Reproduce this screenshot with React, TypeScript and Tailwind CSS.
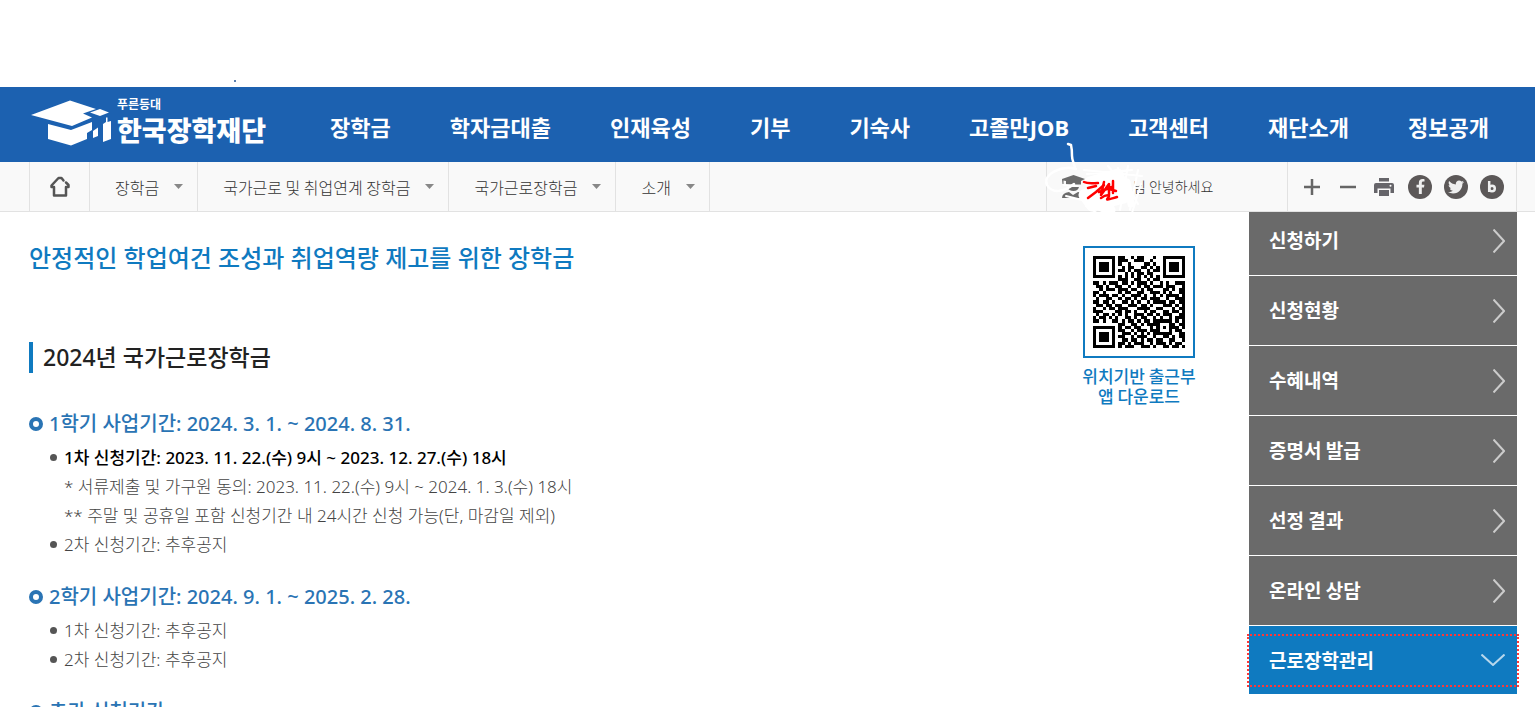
import { FaFacebookF, FaTwitter } from "react-icons/fa";

const NAV = [
  "장학금",
  "학자금대출",
  "인재육성",
  "기부",
  "기숙사",
  "고졸만JOB",
  "고객센터",
  "재단소개",
  "정보공개",
];

const CRUMBS = ["장학금", "국가근로 및 취업연계 장학금", "국가근로장학금", "소개"];

const SIDE_MENU = [
  "신청하기",
  "신청현황",
  "수혜내역",
  "증명서 발급",
  "선정 결과",
  "온라인 상담",
];

type Row = { text: string; bullet?: boolean; strong?: boolean };

const TERMS: { title: string; rows: Row[] }[] = [
  {
    title: "1학기 사업기간: 2024. 3. 1. ~ 2024. 8. 31.",
    rows: [
      {
        text: "1차 신청기간: 2023. 11. 22.(수) 9시 ~ 2023. 12. 27.(수) 18시",
        bullet: true,
        strong: true,
      },
      { text: "* 서류제출 및 가구원 동의: 2023. 11. 22.(수) 9시 ~ 2024. 1. 3.(수) 18시" },
      { text: "** 주말 및 공휴일 포함 신청기간 내 24시간 신청 가능(단, 마감일 제외)" },
      { text: "2차 신청기간: 추후공지", bullet: true },
    ],
  },
  {
    title: "2학기 사업기간: 2024. 9. 1. ~ 2025. 2. 28.",
    rows: [
      { text: "1차 신청기간: 추후공지", bullet: true },
      { text: "2차 신청기간: 추후공지", bullet: true },
    ],
  },
  { title: "추가 신청기간", rows: [] },
];

const QR = [
  "11111110110010110001001111111",
  "10000010111001110010001000001",
  "10111010100100001101001011101",
  "10111010010110011010101011101",
  "10111010110101100101101011101",
  "10000010001010110110001000001",
  "11111110101010101010101111111",
  "00000000111001100101100000000",
  "11010111011010111010010100111",
  "01101001100100101101110111001",
  "00101110111011010110001101011",
  "11010000101100110011101010011",
  "10111011010011101001010111101",
  "01001100101101011011100100111",
  "11011010011010100101111011011",
  "01101101100111011010001110101",
  "10010110111000111100110001011",
  "11100001101101001011001101101",
  "01011010101001110110101110011",
  "10110101001101011001010010111",
  "11010011010110101101111110101",
  "00000000110011010111100011011",
  "11111110101101100010101011101",
  "10000010110010111011100010110",
  "10111010011101010101111110011",
  "10111010110010111001001101011",
  "10111010011011010110110011001",
  "10000010110101110010111010110",
  "11111110101110011101001101101",
];

function QrCode() {
  return (
    <svg viewBox="0 0 29 29" className="h-[92px] w-[92px]" shapeRendering="crispEdges" role="img" aria-label="QR">
      {QR.map((line, y) =>
        line.split("").map((cell, x) =>
          cell === "1" ? <rect key={`${x}-${y}`} x={x} y={y} width="1" height="1" /> : null
        )
      )}
    </svg>
  );
}

function Logo() {
  return (
    <a href="#" className="flex shrink-0 items-start gap-1.5 text-white">
      <svg width="80" height="46" viewBox="0 0 80 46" fill="currentColor" className="mt-[13px]">
        <path d="M0 15 39 .5 65 9 52 13.500 61 17.500 41 26Z" />
        <path d="M59 12.500 69 9 78 12.500 69 16Z" />
        <path d="M17 24 40 30 61 22V30L56 33V39L40 45.500 17 39Z" />
        <path d="M62 31 67 27.500V36L62 38Z" />
        <path d="M75 17.500H76.500V22L80 21V39L72 42V24L75 22Z" />
      </svg>
      <span className="flex flex-col pt-[9px]">
        <span className="text-[12px] leading-[16px] font-bold">푸른등대</span>
        <span className="text-[27px] leading-[36px] font-black">한국장학재단</span>
      </span>
    </a>
  );
}

function HomeIcon() {
  return (
    <svg width="20" height="22" viewBox="0 0 20 22" fill="none" stroke="#555" strokeWidth="2.500" strokeLinejoin="round" strokeLinecap="round">
      <path d="M13.500 4.500 11.500 2H8.500L1.500 9.500V11H4V19.500H16V11H18.500V9L16 6.500" />
    </svg>
  );
}

function PrinterIcon() {
  return (
    <svg width="20" height="20" viewBox="0 0 20 20" fill="#66656a">
      <path d="M5 1H15V4.500H5Z" />
      <path d="M2 6H18Q20 6 20 8V16H16.500V11.500H3.500V16H0V8Q0 6 2 6Z" />
      <path d="M5 13H15V19H5Z" />
      <circle cx="16.500" cy="8.700" r="1" fill="#fff" />
    </svg>
  );
}

function UserIcon() {
  return (
    <svg width="23" height="23" viewBox="0 0 23 23" fill="#6b6b6b">
      <path d="M0 4 11.500 0 23 4 19 6V9.500H4V6L1.500 5.500V9H.5Z" />
      <path d="M5 12H17Q16 16 11.500 16T5 12Z" />
      <path d="M0 23Q0 18 7 17L11 20 16 17Q23 18 23 23Z" />
    </svg>
  );
}

// hand-drawn marks over the user name
function Scribble() {
  return (
    <svg
      width="112"
      height="76"
      viewBox="0 0 112 76"
      fill="none"
      strokeLinecap="round"
      strokeLinejoin="round"
      className="pointer-events-none absolute -top-[22px] -left-[7px]"
    >
      <g stroke="#fff">
        <path d="M28 4 31 5M31 5C32 9 32 12 32 16C32 20 34 23 35 28" strokeWidth="2.500" />
        <path d="M50 42 78 34 84 58 52 66 44 55 62 48 83 42 50 60 70 70" strokeWidth="11" />
        <path d="M36 29C22 25 2 34 7 45C12 54 24 52 34 44" strokeWidth="2.500" />
        <path d="M24 45 37 46M26 56 42 60" strokeWidth="2" />
        <path d="M47 34 92 30M44 30 102 36M68 26 96 60M88 26 80 70M98 30 90 70M101 44 92 73M46 66 60 75M42 60 78 75M82 34 98 64M78 28 70 74M64 72 58 76" strokeWidth="2" />
        <path d="M87 42 91 64" strokeWidth="7" />
      </g>
      <g stroke="#f00" strokeWidth="2.500">
        <path d="M44 42C48 44 53 43 58 43M48 48 56 46M48 58 56 52 64 45" />
        <path d="M64 42 61 55 69 44 69 55M73 41 73 53M66 48 76 51M59 52 72 47" />
        <path d="M61 58C67 54 71 55 68 58C65 61 70 59 77 57" />
      </g>
    </svg>
  );
}

const iconButton = "flex h-6 w-6 items-center justify-center";
const roundButton = "flex h-6 w-6 items-center justify-center rounded-full bg-[#5c5858] text-[#eee]";

export default function App() {
  return (
    <div className="h-screen overflow-hidden bg-white font-['Noto_Sans_CJK_KR',sans-serif] text-[#333]">
      <div className="relative h-[87px]">
        <span className="absolute bottom-[5px] left-[234px] h-0.5 w-0.5 bg-[#5b7fae]" />
      </div>

      <header className="flex h-[75px] bg-[#1c61b0] pr-[46px] pl-[31px]">
        <Logo />
        <nav className="ml-16 flex flex-1 items-center justify-between pt-1.5 font-['Noto_Sans','Noto_Sans_CJK_KR',sans-serif] text-[22px] font-bold text-white">
          {NAV.map((item) => (
            <a key={item} href="#" className="whitespace-nowrap">
              {item}
            </a>
          ))}
        </nav>
      </header>

      <div className="relative z-10 flex h-[50px] border-b border-[#e2e2e2] bg-[#f9f9f9] pr-[18px] pl-[29px]">
        <a href="#" aria-label="홈" className="flex w-[61px] items-center justify-center border-x border-[#e2e2e2]">
          <HomeIcon />
        </a>
        {CRUMBS.map((crumb) => (
          <button
            key={crumb}
            type="button"
            className="flex items-center gap-[15px] border-r border-[#e2e2e2] pr-3.5 pl-[25px] text-[16px] font-light whitespace-nowrap"
          >
            {crumb}
            <svg width="9" height="5" viewBox="0 0 9 5" fill="#888">
              <path d="M0 0H9L4.500 5Z" />
            </svg>
          </button>
        ))}

        <div className="relative ml-auto flex w-[241px] items-center border-l border-[#e2e2e2] pl-[15px]">
          <UserIcon />
          <span className="ml-12 text-[14px] font-light">님 안녕하세요</span>
          <Scribble />
        </div>

        <div className="flex items-center gap-3 border-x border-[#e2e2e2] px-3">
          <button type="button" aria-label="확대" className={iconButton}>
            <svg width="16" height="16" viewBox="0 0 16 16" stroke="#666" strokeWidth="2.500">
              <path d="M8 0V16M0 8H16" />
            </svg>
          </button>
          <button type="button" aria-label="축소" className={iconButton}>
            <svg width="16" height="16" viewBox="0 0 16 16" stroke="#666" strokeWidth="2.500">
              <path d="M0 8H16" />
            </svg>
          </button>
          <button type="button" aria-label="인쇄" className={iconButton}>
            <PrinterIcon />
          </button>
          <a href="#" aria-label="페이스북" className={roundButton}>
            <FaFacebookF size={15} />
          </a>
          <a href="#" aria-label="트위터" className={roundButton}>
            <FaTwitter size={16} />
          </a>
          <a href="#" aria-label="블로그" className={roundButton}>
            <svg width="10" height="12" viewBox="0 0 10 12" fill="none" stroke="currentColor" strokeWidth="2.500">
              <path d="M2.200 0V11" />
              <circle cx="5" cy="7.500" r="2.800" />
            </svg>
          </a>
        </div>
      </div>

      <div className="flex pr-[18px] pl-[29px]">
        <main className="flex-1 pt-7 font-['Noto_Sans','Noto_Sans_CJK_KR',sans-serif]">
          <h1 className="text-[24px] leading-[36px] font-medium text-[#0f7ac0]">
            안정적인 학업여건 조성과 취업역량 제고를 위한 장학금
          </h1>
          <h2 className="mt-[66px] border-l-4 border-[#0f7ac0] pl-2.5 text-[23px] leading-[31px] font-medium text-[#222]">
            2024년 국가근로장학금
          </h2>
          <div className="mt-9 flex flex-col gap-[23px]">
            {TERMS.map((term) => (
              <section key={term.title}>
                <h3 className="flex items-center gap-1.5 text-[20px] leading-[30px] font-medium text-[#2a74b4]">
                  <span className="h-3.5 w-3.5 rounded-full border-4 border-[#2a74b4]" />
                  {term.title}
                </h3>
                <ul className="mt-1 pl-[21px] text-[17px] leading-[29px] font-light text-[#444]">
                  {term.rows.map((row) => (
                    <li key={row.text} className="flex items-center gap-[7px]">
                      <span className={row.bullet ? "h-[7px] w-[7px] rounded-full bg-[#555]" : "w-[7px]"} />
                      <span className={row.strong ? "font-medium text-black" : ""}>{row.text}</span>
                    </li>
                  ))}
                </ul>
              </section>
            ))}
          </div>
        </main>

        <div className="mr-[49px] flex w-[122px] flex-col items-center pt-[34px]">
          <div className="flex h-28 w-28 items-center justify-center border-2 border-[#0f7ac0]">
            <QrCode />
          </div>
          <a href="#" className="mt-2 text-center text-[17px] leading-[20px] font-medium whitespace-nowrap text-[#0f7ac0]">
            위치기반 출근부
            <br />앱 다운로드
          </a>
        </div>

        {/* first item slides under the bar above */}
        <aside className="-mt-1.5 w-[268px] text-[19px] font-bold text-white">
          {SIDE_MENU.map((item) => (
            <a
              key={item}
              href="#"
              className="flex h-[70px] items-center justify-between border-b border-white bg-[#6a6a6a] pr-3 pl-5"
            >
              {item}
              <svg width="12" height="24" viewBox="0 0 12 24" fill="none" stroke="#ccc" strokeWidth="2">
                <path d="M.5 .5 11 12 .5 23.500" />
              </svg>
            </a>
          ))}
          <button type="button" className="relative flex h-[68px] w-full items-center justify-between bg-[#0f7ac0] pr-3 pl-5">
            근로장학관리
            <svg width="24" height="12" viewBox="0 0 24 12" fill="none" stroke="#b7d7ec" strokeWidth="2">
              <path d="M.5 .5 12 11 23.500 .5" />
            </svg>
            <span className="absolute -inset-x-0.5 top-2 bottom-[7px] border-2 border-dotted border-[#ff3838]" />
          </button>
        </aside>
      </div>
    </div>
  );
}
